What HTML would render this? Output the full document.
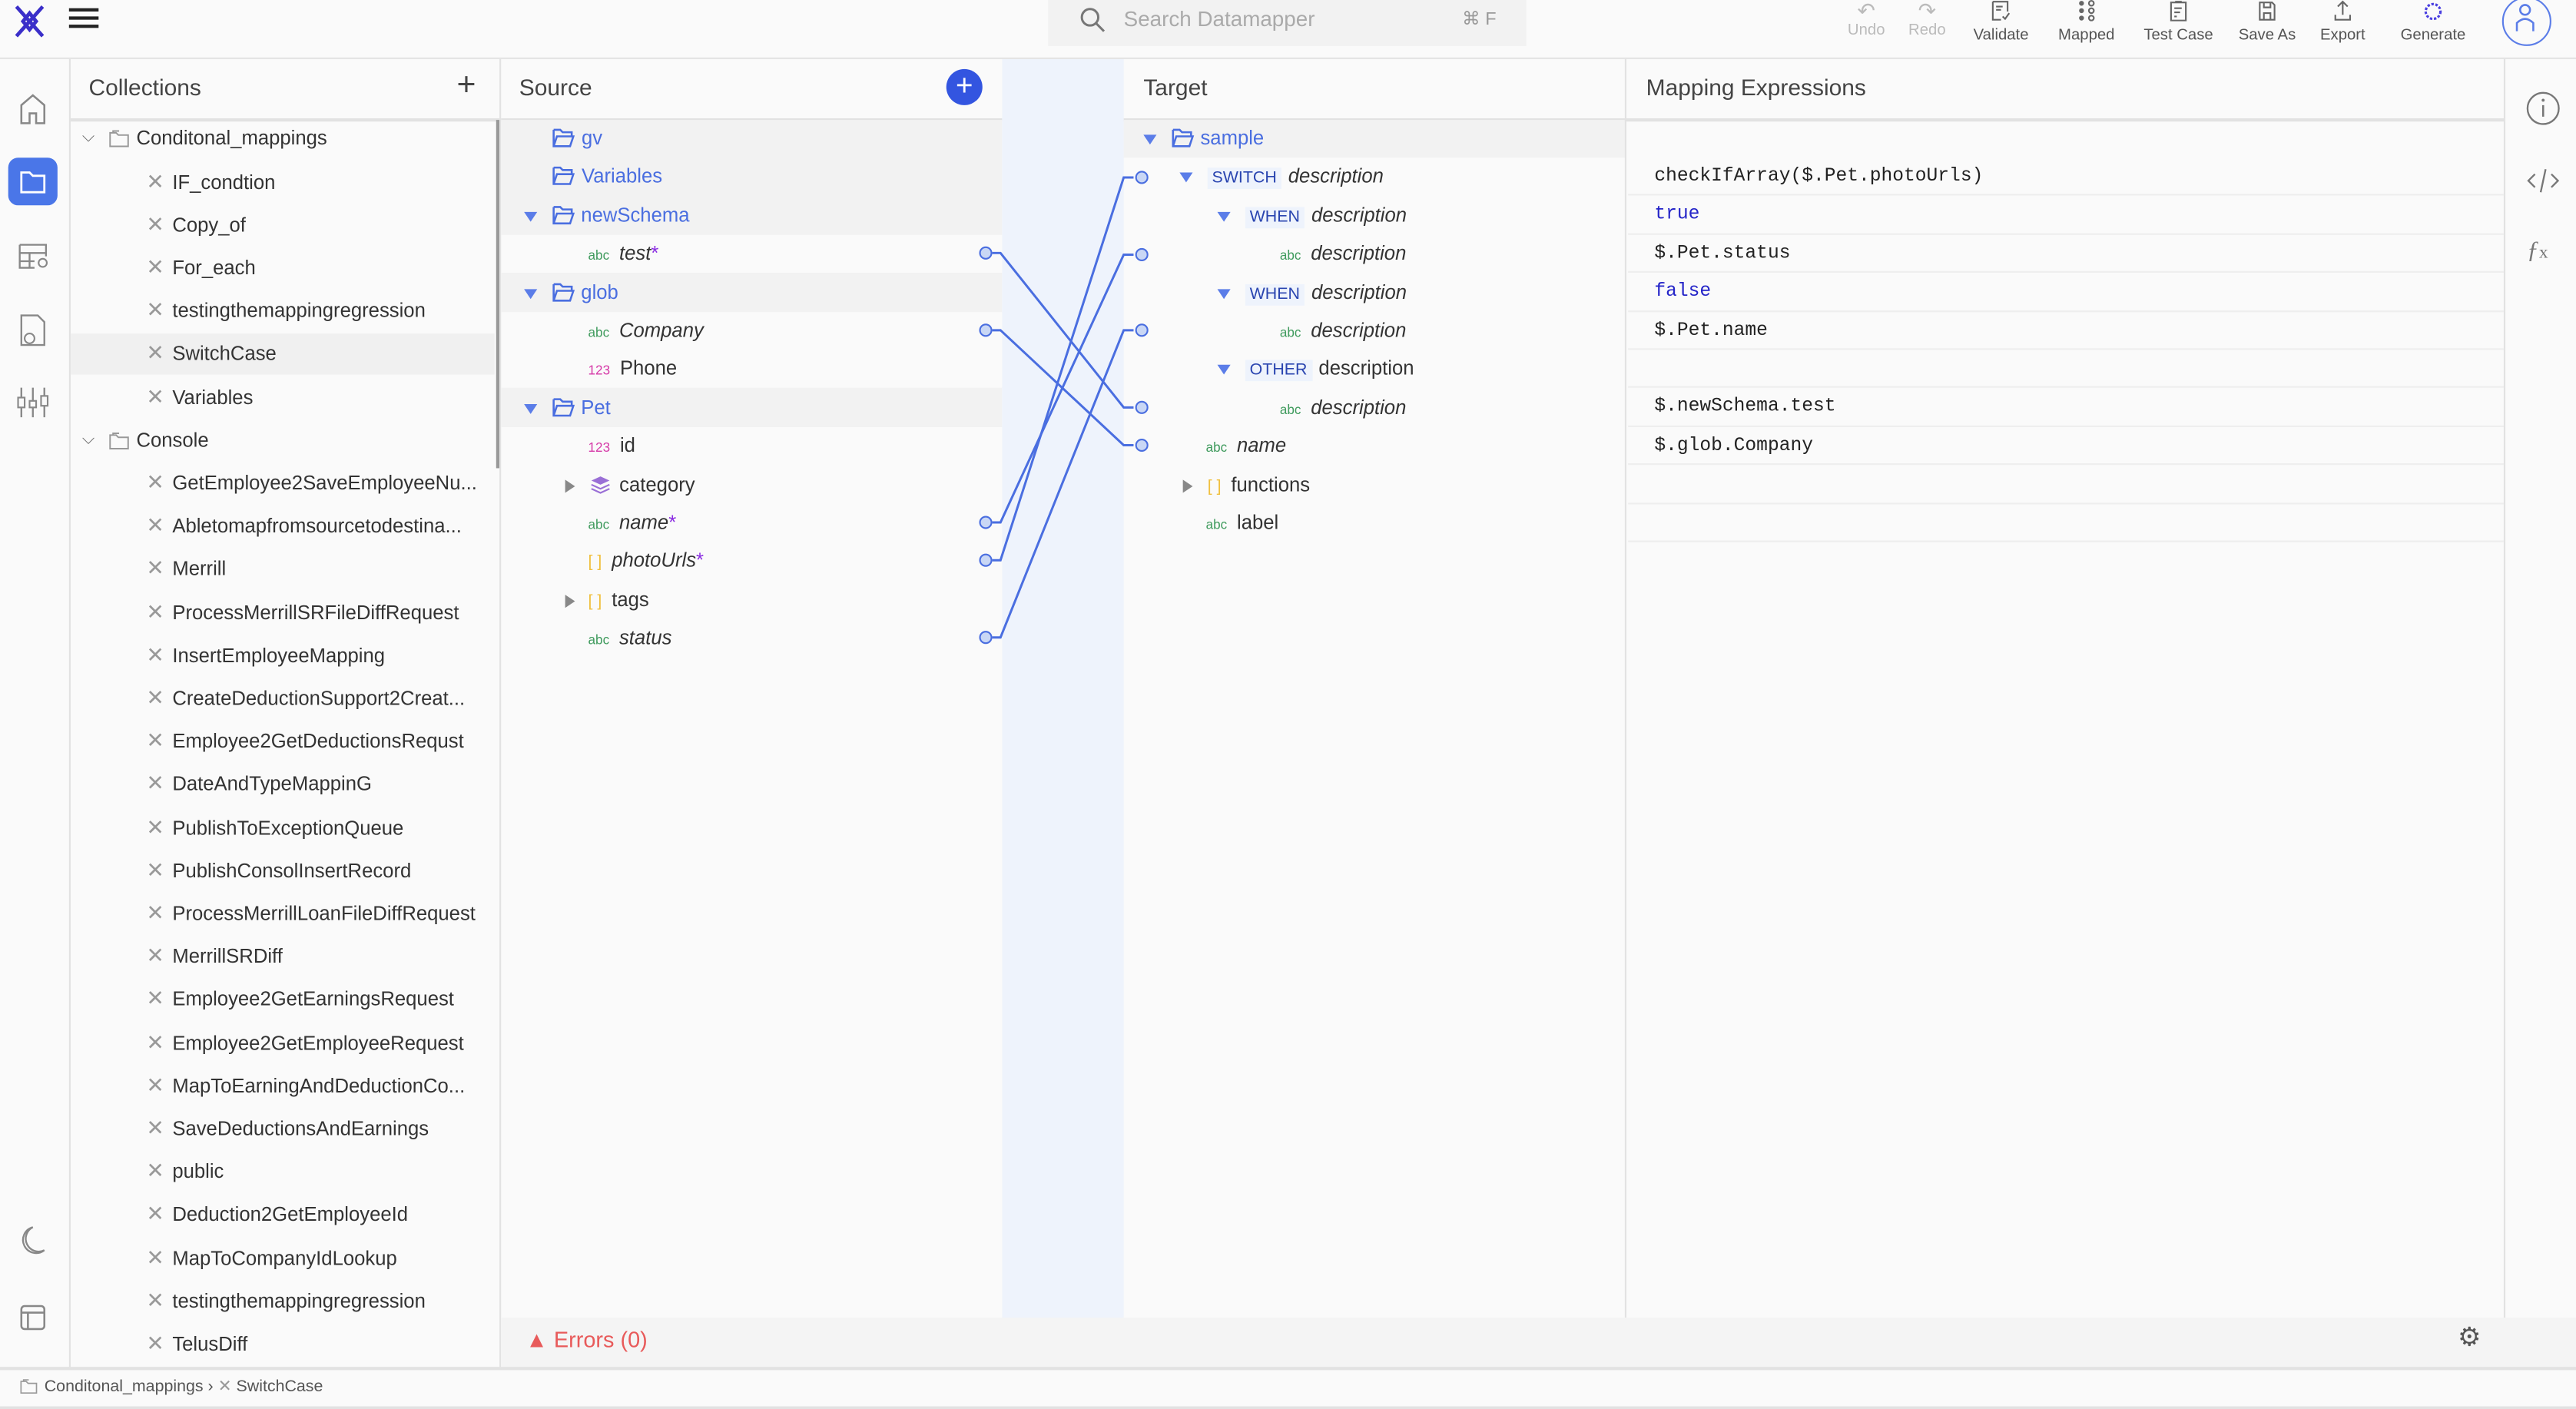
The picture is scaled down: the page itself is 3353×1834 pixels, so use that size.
<!DOCTYPE html>
<html><head><meta charset="utf-8"><style>
html,body{margin:0;padding:0;background:#fafafa;overflow:hidden;width:3353px;height:1834px}
#r{transform:scale(2.1384);transform-origin:0 0;width:1568px;height:858px;position:relative;font-family:"Liberation Sans",sans-serif;color:#333;font-size:12px}
.a{position:absolute;white-space:nowrap;line-height:16px}
.hd{font-size:14px;color:#444}
.x{color:#999;font-size:13px;margin-right:5px}
.blue{color:#4a6ee0}
.abc{color:#3e9a5c;font-size:8px;margin-right:6px}
.n123{color:#d63aa8;font-size:8px;margin-right:6px}
.i{font-style:italic}
.star{color:#8a2be2}
.tag{background:#eef3fc;color:#2a45b0;font-size:10px;padding:1px 3px;margin-right:4px}
.tri{display:inline-block;width:0;height:0;border-left:4.5px solid transparent;border-right:4.5px solid transparent;border-top:6px solid #5b7de8;vertical-align:middle;margin-right:2px}
.trr{display:inline-block;width:0;height:0;border-top:4.5px solid transparent;border-bottom:4.5px solid transparent;border-left:6px solid #888;vertical-align:middle}
.fo{display:inline-block;vertical-align:-2px;margin-right:4px}
.mono{font-family:"Liberation Mono",monospace;font-size:11.5px;color:#222}
.tb{position:absolute;top:0;text-align:center;font-size:9.5px;color:#555;width:50px}
.ci{position:absolute;left:89px;line-height:16px;white-space:nowrap}
.br{color:#f0c040;font-size:10px;margin-right:6px}
</style></head><body><div id="r">
<svg width="0" height="0" style="position:absolute"><defs><symbol id="fold" viewBox="0 0 14 12"><path d="M1 1 H5 L6.5 2.5 H12 V4.5 M1 1 V11 H11 L13 5 H3 L1 11" stroke="#4a6ee0" stroke-width="1.2" fill="none"/></symbol><symbol id="gfold" viewBox="0 0 14 12"><path d="M1 2 H5 L6.5 3.5 H13 V11 H1 Z M3 2 V0.8 H7" stroke="#999" stroke-width="1" fill="none"/></symbol></defs></svg>
<!-- top bar -->
<div class="a" style="left:0;top:0;width:1568px;height:35px;background:#fafafa;border-bottom:1.5px solid #e4e4e4"></div>
<svg class="a" style="left:8px;top:3px" width="22" height="20" viewBox="0 0 22 20"><path d="M2 1 L18 19 M18 1 L2 19 M10 5 L6 10 L10 15 L14 10 Z" stroke="#3b2fc9" stroke-width="2.2" fill="none"/></svg>
<div class="a" style="left:42px;top:5px;width:18px;height:2px;background:#222;box-shadow:0 5px 0 #222,0 10px 0 #222"></div>
<div class="a" style="left:638px;top:0;width:291px;height:28px;background:#f2f2f2"></div>
<svg class="a" style="left:657px;top:4px" width="16" height="16"><circle cx="6.5" cy="6.5" r="5" stroke="#777" stroke-width="1.4" fill="none"/><path d="M10 10 L15 15" stroke="#777" stroke-width="1.4"/></svg>
<div class="a" style="left:684px;top:4px;font-size:13px;color:#aaa">Search Datamapper</div>
<div class="a" style="left:890px;top:4px;font-size:11px;color:#999">⌘ F</div>
<div class="tb" style="left:1111px;color:#bbb"><div style="font-size:13px;line-height:13px">↶</div>Undo</div>
<div class="tb" style="left:1148px;color:#bbb"><div style="font-size:13px;line-height:13px">↷</div>Redo</div>
<div class="tb" style="left:1193px"><svg width="12" height="13" viewBox="0 0 12 13"><path d="M1 1 H10 V7 M1 1 V12 H6 M3 4 H7 M3 6 H6 M7 10 L8.5 11.5 L11 8" stroke="#666" fill="none"/></svg><br>Validate</div>
<div class="tb" style="left:1245px"><svg width="12" height="13" viewBox="0 0 12 13"><circle cx="3" cy="2" r="1.5" fill="#666"/><circle cx="3" cy="6.5" r="1.5" fill="#666"/><circle cx="3" cy="11" r="1.5" fill="#666"/><circle cx="9" cy="2" r="1.5" stroke="#666" fill="none"/><circle cx="9" cy="6.5" r="1.5" stroke="#666" fill="none"/><circle cx="9" cy="11" r="1.5" stroke="#666" fill="none"/></svg><br>Mapped</div>
<div class="tb" style="left:1301px"><svg width="12" height="13" viewBox="0 0 12 13"><rect x="1.5" y="1.5" width="9" height="11" stroke="#666" fill="none"/><path d="M4 1 H8 M3.5 5 H8 M3.5 7.5 H7 M3.5 10 H5" stroke="#666"/></svg><br>Test Case</div>
<div class="tb" style="left:1355px"><svg width="12" height="13" viewBox="0 0 12 13"><path d="M1.5 1.5 H9 L10.5 3 V12 H1.5 Z M4 1.5 V4.5 H8 V1.5 M4 12 V8 H8 V12" stroke="#666" fill="none"/></svg><br>Save As</div>
<div class="tb" style="left:1401px"><svg width="12" height="13" viewBox="0 0 12 13"><path d="M6 1 V9 M3 4 L6 1 L9 4 M1.5 9 V12 H10.5 V9" stroke="#666" fill="none"/></svg><br>Export</div>
<div class="tb" style="left:1456px;top:1px"><svg width="12" height="12"><circle cx="6" cy="6" r="4.5" stroke="#4a3fe0" stroke-dasharray="1.5 1" fill="none" stroke-width="1.5"/></svg><br>Generate</div>
<div class="a" style="left:1523px;top:-2px;width:28px;height:28px;border:1.3px solid #5b7de8;border-radius:50%"></div>
<svg class="a" style="left:1530px;top:1px" width="14" height="20"><circle cx="7" cy="5" r="3" stroke="#5b7de8" fill="none" stroke-width="1.2"/><path d="M2 18 V13 Q7 8 12 13 V18" stroke="#5b7de8" fill="none" stroke-width="1.2"/></svg>

<!-- left icon bar -->
<div class="a" style="left:42px;top:36px;width:1px;height:796px;background:#e2e2e2"></div>
<svg class="a" style="left:11px;top:56px" width="18" height="20"><path d="M2 19 V8 L9 2 L16 8 V19 H11 V13 H7 V19 Z" stroke="#888" fill="none" stroke-width="1.2"/></svg>
<div class="a" style="left:5px;top:96px;width:30px;height:29px;background:#4a76e8;border-radius:6px"></div>
<svg class="a" style="left:11px;top:102px" width="18" height="17"><path d="M2 3 H7 L9 5 H16 V15 H2 Z" stroke="#fff" fill="none" stroke-width="1.3"/></svg>
<svg class="a" style="left:11px;top:147px" width="20" height="18"><path d="M1 2 H17 V9 M1 2 V16 H10 M1 7 H17 M1 12 H10 M7 7 V16" stroke="#888" fill="none" stroke-width="1.1"/><circle cx="15" cy="13" r="2.5" stroke="#888" fill="none"/></svg>
<svg class="a" style="left:11px;top:190px" width="18" height="22"><path d="M2 2 H12 L16 6 V20 H2 Z" stroke="#888" fill="none" stroke-width="1.1"/><circle cx="7" cy="16" r="3" stroke="#888" fill="none"/></svg>
<svg class="a" style="left:10px;top:235px" width="22" height="20"><path d="M3 1 V19 M10 1 V19 M17 1 V19" stroke="#888" stroke-width="1.1"/><rect x="1" y="7" width="4" height="6" fill="#fafafa" stroke="#888"/><rect x="8" y="9" width="4" height="4" fill="#fafafa" stroke="#888"/><rect x="15" y="6" width="4" height="6" fill="#fafafa" stroke="#888"/></svg>
<svg class="a" style="left:12px;top:746px" width="16" height="18"><path d="M8 1 A8 8 0 1 0 15 15 A7 7 0 0 1 8 1 Z" stroke="#888" fill="none" stroke-width="1.1"/></svg>
<svg class="a" style="left:12px;top:794px" width="16" height="16"><rect x="1" y="1" width="14" height="14" rx="2" stroke="#888" fill="none" stroke-width="1.2"/><path d="M1 5 H15 M5 5 V15" stroke="#888" stroke-width="1.2"/></svg>

<!-- collections -->
<div class="a" style="left:43px;top:72px;width:261px;height:1.5px;background:#e2e2e2"></div>
<div class="a hd" style="left:54px;top:45px">Collections</div>
<div class="a" style="left:278px;top:42px;font-size:20px;color:#444;line-height:20px">+</div>
<div class="a" style="left:302px;top:73px;width:2px;height:212px;background:#999"></div>
<div class="a" style="left:304px;top:36px;width:1px;height:796px;background:#e2e2e2"></div>
<div class="a" style="left:43px;top:203px;width:258px;height:25px;background:#f0f0f0"></div>
<div class="a" style="left:50px;top:76px;color:#666;font-size:10px">⌵</div>
<div class="a" style="left:66px;top:76px"><svg class="fo" width="13" height="11"><use href="#gfold"/></svg>Conditonal_mappings</div>
<div class="a" style="left:50px;top:260px;color:#666;font-size:10px">⌵</div>
<div class="a" style="left:66px;top:260px"><svg class="fo" width="13" height="11"><use href="#gfold"/></svg>Console</div>
<div class="ci" style="top:103px"><span class="x">✕</span>IF_condtion</div>
<div class="ci" style="top:129px"><span class="x">✕</span>Copy_of</div>
<div class="ci" style="top:155px"><span class="x">✕</span>For_each</div>
<div class="ci" style="top:181px"><span class="x">✕</span>testingthemappingregression</div>
<div class="ci" style="top:207px"><span class="x">✕</span>SwitchCase</div>
<div class="ci" style="top:234px"><span class="x">✕</span>Variables</div>
<div class="ci" style="top:286px"><span class="x">✕</span>GetEmployee2SaveEmployeeNu...</div>
<div class="ci" style="top:312px"><span class="x">✕</span>Abletomapfromsourcetodestina...</div>
<div class="ci" style="top:338px"><span class="x">✕</span>Merrill</div>
<div class="ci" style="top:365px"><span class="x">✕</span>ProcessMerrillSRFileDiffRequest</div>
<div class="ci" style="top:391px"><span class="x">✕</span>InsertEmployeeMapping</div>
<div class="ci" style="top:417px"><span class="x">✕</span>CreateDeductionSupport2Creat...</div>
<div class="ci" style="top:443px"><span class="x">✕</span>Employee2GetDeductionsRequst</div>
<div class="ci" style="top:469px"><span class="x">✕</span>DateAndTypeMappinG</div>
<div class="ci" style="top:496px"><span class="x">✕</span>PublishToExceptionQueue</div>
<div class="ci" style="top:522px"><span class="x">✕</span>PublishConsolInsertRecord</div>
<div class="ci" style="top:548px"><span class="x">✕</span>ProcessMerrillLoanFileDiffRequest</div>
<div class="ci" style="top:574px"><span class="x">✕</span>MerrillSRDiff</div>
<div class="ci" style="top:600px"><span class="x">✕</span>Employee2GetEarningsRequest</div>
<div class="ci" style="top:627px"><span class="x">✕</span>Employee2GetEmployeeRequest</div>
<div class="ci" style="top:653px"><span class="x">✕</span>MapToEarningAndDeductionCo...</div>
<div class="ci" style="top:679px"><span class="x">✕</span>SaveDeductionsAndEarnings</div>
<div class="ci" style="top:705px"><span class="x">✕</span>public</div>
<div class="ci" style="top:731px"><span class="x">✕</span>Deduction2GetEmployeeId</div>
<div class="ci" style="top:758px"><span class="x">✕</span>MapToCompanyIdLookup</div>
<div class="ci" style="top:784px"><span class="x">✕</span>testingthemappingregression</div>
<div class="ci" style="top:810px"><span class="x">✕</span>TelusDiff</div>

<!-- source -->
<div class="a" style="left:305px;top:72px;width:305px;height:1.5px;background:#e2e2e2"></div>
<div class="a hd" style="left:316px;top:45px">Source</div>
<div class="a" style="left:576px;top:42px;width:22px;height:22px;border-radius:50%;background:#3355e0;color:#fff;text-align:center;line-height:21px;font-size:18px">+</div>
<div class="a" style="left:305px;top:73px;width:305px;height:70px;background:#f2f2f2"></div>
<div class="a" style="left:305px;top:166px;width:305px;height:24px;background:#f2f2f2"></div>
<div class="a" style="left:305px;top:236px;width:305px;height:24px;background:#f2f2f2"></div>
<div class="a blue" style="left:336px;top:76px"><svg class="fo" width="14" height="12"><use href="#fold"/></svg>gv</div>
<div class="a blue" style="left:336px;top:99px"><svg class="fo" width="14" height="12"><use href="#fold"/></svg>Variables</div>
<div class="a blue" style="left:319px;top:123px"><span class="tri"></span>&nbsp; <svg class="fo" width="14" height="12"><use href="#fold"/></svg>newSchema</div>
<div class="a" style="left:358px;top:146px"><span class="abc">abc</span><span class="i">test</span><span class="star">*</span></div>
<div class="a blue" style="left:319px;top:170px"><span class="tri"></span>&nbsp; <svg class="fo" width="14" height="12"><use href="#fold"/></svg>glob</div>
<div class="a" style="left:358px;top:193px"><span class="abc">abc</span><span class="i">Company</span></div>
<div class="a" style="left:358px;top:216px"><span class="n123">123</span>Phone</div>
<div class="a blue" style="left:319px;top:240px"><span class="tri"></span>&nbsp; <svg class="fo" width="14" height="12"><use href="#fold"/></svg>Pet</div>
<div class="a" style="left:358px;top:263px"><span class="n123">123</span>id</div>
<div class="a" style="left:344px;top:287px"><span class="trr"></span></div>
<svg class="a" style="left:359px;top:289px" width="13" height="12" viewBox="0 0 13 12"><path d="M6.5 1 L12 3.5 L6.5 6 L1 3.5 Z" fill="#9a6fd6"/><path d="M1 6 L6.5 8.5 L12 6 M1 8.5 L6.5 11 L12 8.5" stroke="#9a6fd6" fill="none"/></svg>
<div class="a" style="left:377px;top:287px">category</div>
<div class="a" style="left:358px;top:310px"><span class="abc">abc</span><span class="i">name</span><span class="star">*</span></div>
<div class="a" style="left:358px;top:333px"><span class="br">[ ]</span><span class="i">photoUrls</span><span class="star">*</span></div>
<div class="a" style="left:344px;top:357px"><span class="trr"></span></div>
<div class="a" style="left:358px;top:357px"><span class="br">[ ]</span>tags</div>
<div class="a" style="left:358px;top:380px"><span class="abc">abc</span><span class="i">status</span></div>

<!-- mapping band -->
<div class="a" style="left:610px;top:36px;width:74px;height:766px;background:#eef3fc"></div>
<svg class="a" style="left:590px;top:90px" width="115" height="310" viewBox="590 90 115 310">
<g stroke="#4a6ee0" stroke-width="1.4" fill="none">
<path d="M604 154 H609 L684 248 H690"/>
<path d="M604 201 H609 L684 271 H690"/>
<path d="M604 318 H609 L684 155 H690"/>
<path d="M604 341 H609 L684 108 H690"/>
<path d="M604 388 H609 L684 201 H690"/>
</g>
<g fill="#c9d7f5" stroke="#4a6ee0" stroke-width="1">
<circle cx="600" cy="154" r="3.5"/><circle cx="600" cy="201" r="3.5"/><circle cx="600" cy="318" r="3.5"/><circle cx="600" cy="341" r="3.5"/><circle cx="600" cy="388" r="3.5"/>
<circle cx="695" cy="108" r="3.5"/><circle cx="695" cy="155" r="3.5"/><circle cx="695" cy="201" r="3.5"/><circle cx="695" cy="248" r="3.5"/><circle cx="695" cy="271" r="3.5"/>
</g></svg>

<!-- target -->
<div class="a" style="left:684px;top:72px;width:306px;height:1.5px;background:#e2e2e2"></div>
<div class="a hd" style="left:696px;top:45px">Target</div>
<div class="a" style="left:684px;top:73px;width:305px;height:23px;background:#f2f2f2"></div>
<div class="a" style="left:989px;top:36px;width:1px;height:766px;background:#e2e2e2"></div>
<div class="a blue" style="left:696px;top:76px"><span class="tri"></span>&nbsp; <svg class="fo" width="14" height="12"><use href="#fold"/></svg>sample</div>
<div class="a" style="left:718px;top:99px"><span class="tri"></span>&nbsp; <span class="tag">SWITCH</span><span class="i">description</span></div>
<div class="a" style="left:741px;top:123px"><span class="tri"></span>&nbsp; <span class="tag">WHEN</span><span class="i">description</span></div>
<div class="a" style="left:779px;top:146px"><span class="abc">abc</span><span class="i">description</span></div>
<div class="a" style="left:741px;top:170px"><span class="tri"></span>&nbsp; <span class="tag">WHEN</span><span class="i">description</span></div>
<div class="a" style="left:779px;top:193px"><span class="abc">abc</span><span class="i">description</span></div>
<div class="a" style="left:741px;top:216px"><span class="tri"></span>&nbsp; <span class="tag">OTHER</span>description</div>
<div class="a" style="left:779px;top:240px"><span class="abc">abc</span><span class="i">description</span></div>
<div class="a" style="left:734px;top:263px"><span class="abc">abc</span><span class="i">name</span></div>
<div class="a" style="left:720px;top:287px"><span class="trr"></span></div>
<div class="a" style="left:735px;top:287px"><span class="br">[ ]</span>functions</div>
<div class="a" style="left:734px;top:310px"><span class="abc">abc</span>label</div>

<!-- expressions -->
<div class="a" style="left:990px;top:72px;width:535px;height:1.5px;background:#e2e2e2"></div>
<div class="a hd" style="left:1002px;top:45px">Mapping Expressions</div>
<div style="position:absolute;left:991px;top:96px;width:533px">
<div class="mono" style="height:22.4px;line-height:23px;border-bottom:1px solid #eee;padding-left:16px">checkIfArray($.Pet.photoUrls)</div>
<div class="mono" style="height:22.4px;line-height:23px;border-bottom:1px solid #eee;padding-left:16px;color:#2424c8">true</div>
<div class="mono" style="height:22.4px;line-height:23px;border-bottom:1px solid #eee;padding-left:16px">$.Pet.status</div>
<div class="mono" style="height:22.4px;line-height:23px;border-bottom:1px solid #eee;padding-left:16px;color:#2424c8">false</div>
<div class="mono" style="height:22.4px;line-height:23px;border-bottom:1px solid #eee;padding-left:16px">$.Pet.name</div>
<div class="mono" style="height:22.4px;line-height:23px;border-bottom:1px solid #eee;padding-left:16px"></div>
<div class="mono" style="height:22.4px;line-height:23px;border-bottom:1px solid #eee;padding-left:16px">$.newSchema.test</div>
<div class="mono" style="height:22.4px;line-height:23px;border-bottom:1px solid #eee;padding-left:16px">$.glob.Company</div>
<div class="mono" style="height:22.4px;line-height:23px;border-bottom:1px solid #eee;padding-left:16px"></div>
<div class="mono" style="height:22.4px;line-height:23px;border-bottom:1px solid #eee;padding-left:16px"></div>
</div>
<div class="a" style="left:1524px;top:36px;width:1px;height:766px;background:#e2e2e2"></div>
<svg class="a" style="left:1537px;top:55px" width="22" height="22"><circle cx="11" cy="11" r="9.5" stroke="#777" fill="none" stroke-width="1.1"/><path d="M11 9 V16" stroke="#777" stroke-width="1.2"/><circle cx="11" cy="6" r="0.9" fill="#777"/></svg>
<svg class="a" style="left:1537px;top:101px" width="22" height="18"><path d="M6 5 L2 9 L6 13 M16 5 L20 9 L16 13 M12.5 2 L9.5 16" stroke="#777" fill="none" stroke-width="1.1"/></svg>
<div class="a" style="left:1538px;top:145px;font-size:15px;color:#777;font-style:italic;font-family:'Liberation Serif',serif">ƒ<span style="font-size:11px;font-style:normal">x</span></div>

<!-- footer -->
<div class="a" style="left:305px;top:802px;width:1263px;height:30px;background:#f4f4f4"></div>
<div class="a" style="left:320px;top:808px;font-size:13.5px;color:#e85a5a">▲ Errors (0)</div>
<div class="a" style="left:1496px;top:807px;font-size:16px;color:#555">⚙</div>
<div class="a" style="left:0;top:832px;width:1568px;height:1.5px;background:#e2e2e2"></div>
<div class="a" style="left:12px;top:837px;font-size:10px;color:#555"><svg class="fo" width="11" height="10"><use href="#gfold"/></svg>Conditonal_mappings › <span style="color:#999">✕</span> SwitchCase</div>
<div class="a" style="left:0;top:856px;width:1568px;height:2px;background:#e2e2e2"></div>
</div></body></html>
